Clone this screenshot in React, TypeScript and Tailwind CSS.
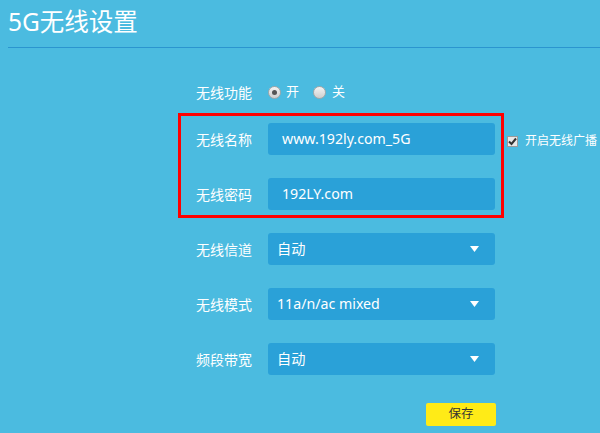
import React from 'react';

const font = { fontFamily: '"Noto Sans", "Noto Sans CJK SC", sans-serif' };

const Radio: React.FC<{ checked?: boolean }> = ({ checked }) => (
  <span className="flex h-[13px] w-[13px] items-center justify-center rounded-full border border-[#a7a7a7] bg-linear-to-b from-[#f4f4f4] to-[#cfcfcf]">
    {checked && <span className="h-[5px] w-[5px] rounded-full bg-[#555]" />}
  </span>
);

const Label: React.FC<{ children: React.ReactNode; className?: string }> = ({ children, className }) => (
  <div className={`shrink-0 text-[14px] text-white ${className ?? ''}`}>{children}</div>
);

const TextField: React.FC<{ value: string }> = ({ value }) => (
  <div className="flex h-[32px] w-[227px] items-center rounded-[3px] bg-[#2aa1d8] pl-[14px] text-[14.2px] text-white">
    {value}
  </div>
);

const SelectField: React.FC<{ value: string }> = ({ value }) => (
  <div className="flex h-[32px] w-[227px] items-center justify-between rounded-[3px] bg-[#2aa1d8] pl-[9px] pr-[16px] text-[14.2px] text-white">
    <span>{value}</span>
    <svg width="9" height="6" viewBox="0 0 9 6">
      <path d="M0 0 H9 L4.5 6 Z" fill="#fff" />
    </svg>
  </div>
);

const App: React.FC = () => {
  const selects = [
    { label: '无线信道', value: '自动' },
    { label: '无线模式', value: '11a/n/ac mixed' },
    { label: '频段带宽', value: '自动' },
  ];

  return (
    <div className="h-[433px] w-[600px] overflow-hidden bg-[#4bbbe0]" style={font}>
      <div className="ml-[8px] flex h-[48px] items-center border-b border-[#2b95cf] pb-[3px]">
        <h1 className="text-[24.5px] leading-none text-white">5G无线设置</h1>
      </div>

      <div className="ml-[178px]">
        <div className="mt-[34px] flex h-[20px] items-center">
          <Label className="w-[90px] pl-[18px]">无线功能</Label>
          <Radio checked />
          <span className="ml-[5px] text-[13px] text-white">开</span>
          <span className="ml-[14px]">
            <Radio />
          </span>
          <span className="ml-[6px] text-[13px] text-white">关</span>
        </div>

        <div className="mt-[11px] flex items-start">
          <div className="flex w-[326px] flex-col gap-[23px] border-[3px] border-[#ff0000] pb-[5px] pt-[7px]">
            <div className="flex items-center">
              <Label className="w-[87px] pl-[15px]">无线名称</Label>
              <TextField value="www.192ly.com_5G" />
            </div>
            <div className="flex items-center">
              <Label className="w-[87px] pl-[15px]">无线密码</Label>
              <TextField value="192LY.com" />
            </div>
          </div>
          <div className="ml-[3px] mt-[19px] flex items-center gap-[7px]">
            <span className="flex h-[11px] w-[11px] items-center justify-center border border-[#9a9a9a] bg-[#e8e8e8]">
              <svg width="9" height="9" viewBox="0 0 9 9">
                <path d="M1 4.5 L3.5 7 L8 1.5" fill="none" stroke="#333" strokeWidth="2" />
              </svg>
            </span>
            <span className="text-[12px] whitespace-nowrap text-white">开启无线广播</span>
          </div>
        </div>

        <div className="mt-[15px] flex flex-col gap-[23px]">
          {selects.map((s) => (
            <div key={s.label} className="flex items-center">
              <Label className="w-[90px] pl-[18px]">{s.label}</Label>
              <SelectField value={s.value} />
            </div>
          ))}
        </div>

        <div className="mt-[28px] flex">
          <button className="ml-[248px] flex h-[23px] w-[70px] items-center justify-center rounded-[2px] bg-[#ffeb17] text-[12.5px] text-[#333]">
            保存
          </button>
        </div>
      </div>
    </div>
  );
};

export default App;
